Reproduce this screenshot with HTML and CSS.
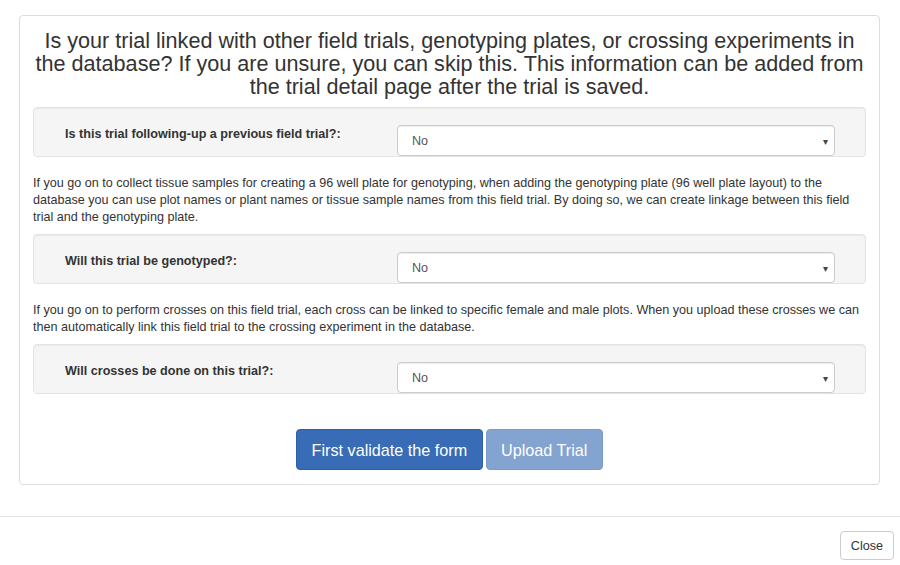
FILE: index.html
```html
<!DOCTYPE html>
<html>
<head>
<meta charset="utf-8">
<link rel="stylesheet" href="styles.css">
</head>
<body>
<div class="body">
  <div class="panel">
    <h3 class="title">Is your trial linked with other field trials, genotyping plates, or crossing experiments in the database? If you are unsure, you can skip this. This information can be added from the trial detail page after the trial is saved.</h3>
    <div class="well">
      <label class="lbl">Is this trial following-up a previous field trial?:</label>
      <div class="select"><span>No</span><span class="caret">▾</span></div>
    </div>
    <p class="help">If you go on to collect tissue samples for creating a 96 well plate for genotyping, when adding the genotyping plate (96 well plate layout) to the database you can use plot names or plant names or tissue sample names from this field trial. By doing so, we can create linkage between this field trial and the genotyping plate.</p>
    <div class="well">
      <label class="lbl">Will this trial be genotyped?:</label>
      <div class="select"><span>No</span><span class="caret">▾</span></div>
    </div>
    <p class="help">If you go on to perform crosses on this field trial, each cross can be linked to specific female and male plots. When you upload these crosses we can then automatically link this field trial to the crossing experiment in the database.</p>
    <div class="well">
      <label class="lbl">Will crosses be done on this trial?:</label>
      <div class="select"><span>No</span><span class="caret">▾</span></div>
    </div>
    <div class="actions">
      <button class="btn btn-primary">First validate the form</button>
      <button class="btn btn-primary disabled">Upload Trial</button>
    </div>
  </div>
</div>
<div class="footer">
  <button class="close-btn">Close</button>
</div>
</body>
</html>
```
FILE: styles.css
```css
* { box-sizing: border-box; }
html, body { margin: 0; padding: 0; background: #fff; }
body {
  font-family: "Liberation Sans", Arial, sans-serif;
  font-size: 12.6px;
  line-height: 17px;
  color: #333;
}
.body { padding: 15px 20px 31px 19px; }
.panel {
  border: 1px solid #ddd;
  border-radius: 4px;
  padding: 13px 13px 14px 13px;
}
.title {
  margin: 0 0 9px 0;
  font-size: 21.6px;
  line-height: 23px;
  font-weight: normal;
  text-align: center;
  color: #333;
}
.well {
  display: flex;
  align-items: flex-start;
  background: #f5f5f5;
  border: 1px solid #e3e3e3;
  border-radius: 4px;
  box-shadow: inset 0 1px 1px rgba(0,0,0,.05);
  padding: 17px 30px 0 31px;
  height: 50px;
}
.lbl {
  flex: 0 0 332px;
  font-weight: bold;
  line-height: 17px;
  padding-top: 1px;
}
.select {
  flex: 1;
  height: 31px;
  border: 1px solid #ccc;
  border-radius: 4px;
  background: #fff;
  box-shadow: inset 0 1px 1px rgba(0,0,0,.075);
  display: flex;
  align-items: center;
  justify-content: space-between;
  padding: 1px 6px 0 14px;
  color: #555;
}
.caret { font-size: 10px; color: #444; }
.help { margin: 18px 0 8px 0; }
.actions {
  display: flex;
  justify-content: center;
  gap: 3px;
  margin-top: 35px;
}
.btn {
  font-family: "Liberation Sans", Arial, sans-serif;
  font-size: 16.2px;
  line-height: 22px;
  height: 41px;
  padding: 0 14.4px;
  border-radius: 4px;
  border: 1px solid #2e5fa6;
  color: #fff;
  background: #386cb6;
}
.btn.disabled { opacity: .62; }
.footer {
  border-top: 1px solid #e5e5e5;
  padding: 14px 6px 15px;
  display: flex;
  justify-content: flex-end;
}
.close-btn {
  font-family: "Liberation Sans", Arial, sans-serif;
  font-size: 12.6px;
  height: 29px;
  padding: 0 10px;
  border: 1px solid #ccc;
  border-radius: 4px;
  background: #fff;
  color: #333;
}
```
